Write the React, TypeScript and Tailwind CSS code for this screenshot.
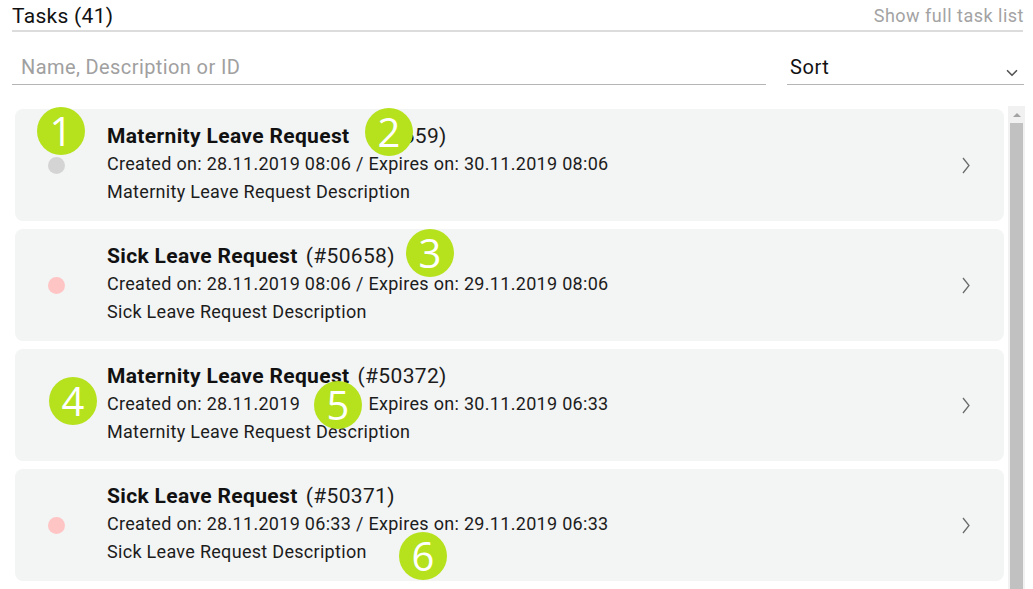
import { ChevronDown } from "lucide-react";

type Task = {
  title: string;
  id: string;
  created: string;
  expires: string;
  description: string;
  dot: string;
};

const tasks: Task[] = [
  {
    title: "Maternity Leave Request",
    id: "(#50659)",
    created: "28.11.2019 08:06",
    expires: "30.11.2019 08:06",
    description: "Maternity Leave Request Description",
    dot: "bg-[#d4d4d4]",
  },
  {
    title: "Sick Leave Request",
    id: "(#50658)",
    created: "28.11.2019 08:06",
    expires: "29.11.2019 08:06",
    description: "Sick Leave Request Description",
    dot: "bg-[#ffc4c4]",
  },
  {
    title: "Maternity Leave Request",
    id: "(#50372)",
    created: "28.11.2019 06:33",
    expires: "30.11.2019 06:33",
    description: "Maternity Leave Request Description",
    dot: "bg-transparent",
  },
  {
    title: "Sick Leave Request",
    id: "(#50371)",
    created: "28.11.2019 06:33",
    expires: "29.11.2019 06:33",
    description: "Sick Leave Request Description",
    dot: "bg-[#ffc4c4]",
  },
];

// numbered markers that sit over the screenshot; some had a patch behind them
const callouts = [
  { n: 1, x: 61, y: 131, cover: null },
  { n: 2, x: 389, y: 132, cover: { l: 36, r: 0, t: 12, b: 16 } },
  { n: 3, x: 430, y: 253, cover: null },
  { n: 4, x: 73, y: 401, cover: null },
  { n: 5, x: 338, y: 405, cover: { l: 36, r: 30, t: 12, b: 12 } },
  { n: 6, x: 423, y: 556, cover: null },
];

const TaskCard = ({ task }: { task: Task }) => (
  <div className="h-[112px] shrink-0 rounded-lg bg-[#f3f4f4] flex items-center">
    <div className="w-[92px] flex justify-center pr-[10px]">
      <div className={`w-[17px] h-[17px] rounded-full ${task.dot}`} />
    </div>
    <div className="flex-1 flex flex-col text-[18px] tracking-[0.3px] leading-[28px] text-[#1c1c1c] pb-[3px]">
      <div className="text-[21px] tracking-[0.35px]">
        <span className="font-bold text-[#111]">{task.title}</span>
        <span className="ml-[8px]">{task.id}</span>
      </div>
      <div>
        Created on: {task.created} / Expires on: {task.expires}
      </div>
      <div>{task.description}</div>
    </div>
    <div className="w-[42px] flex justify-start">
      <svg width="8" height="17" viewBox="0 0 8 17" fill="none">
        <path d="M1 1 L7 8.5 L1 16" stroke="#6b6b6b" strokeWidth="1.3" />
      </svg>
    </div>
  </div>
);

export default function App() {
  return (
    <div className="relative w-[1033px] h-[589px] overflow-hidden bg-white font-['Roboto',sans-serif]">
      {/* Header */}
      <div className="ml-[12px] w-[1011px] h-[32px] border-b-2 border-[#dcdcdc] flex items-start justify-between pt-[3px]">
        <span className="text-[21px] tracking-[0.3px] leading-[26px] text-[#111]">Tasks (41)</span>
        <span className="text-[18px] tracking-[0.5px] leading-[26px] text-[#a3a3a3] mr-[-1px]">Show full task list</span>
      </div>

      {/* Filters */}
      <div className="ml-[12px] mt-[20px] flex gap-[21px]">
        <div className="w-[754px] h-[33px] border-b border-[#b5b5b5] flex items-start pl-[9px]">
          <span className="text-[20px] tracking-[0.4px] leading-[30px] text-[#a0a0a0]">Name, Description or ID</span>
        </div>
        <div className="w-[237px] h-[33px] border-b border-[#b5b5b5] flex items-start justify-between pl-[3px]">
          <span className="text-[20px] tracking-[0.6px] leading-[30px] text-[#111]">Sort</span>
          <ChevronDown size={18} strokeWidth={2.2} className="text-[#555] mt-[12px] mr-[3px]" />
        </div>
      </div>

      {/* List + scrollbar */}
      <div className="mt-[21px] flex">
        <div className="ml-[15px] w-[989px] pt-[3px] flex flex-col gap-[8px]">
          {tasks.map((t, i) => (
            <TaskCard key={i} task={t} />
          ))}
        </div>
        <div className="ml-[4px] w-[17px] h-[500px] bg-[#f1f1f1] flex flex-col items-center">
          <div className="h-[17px] flex items-center justify-center">
            <div className="w-0 h-0 border-l-[4px] border-r-[4px] border-b-[4px] border-l-transparent border-r-transparent border-b-[#a3a3a3]" />
          </div>
          <div className="w-[13px] flex-1 bg-[#c1c1c1]" />
        </div>
      </div>

      {/* Callouts */}
      {callouts.map((c) =>
        c.cover ? (
          <div
            key={`cover-${c.n}`}
            className="absolute bg-[#f3f4f4]"
            style={{
              left: c.x - c.cover.l,
              top: c.y - c.cover.t,
              width: c.cover.l + c.cover.r,
              height: c.cover.t + c.cover.b,
            }}
          />
        ) : null
      )}
      {callouts.map((c) => (
        <div
          key={c.n}
          className="absolute w-[48px] h-[48px] rounded-full bg-[#b5e21c] flex items-center justify-center text-white text-[40px] leading-none font-['Open_Sans',sans-serif]"
          style={{ left: c.x - 24, top: c.y - 24 }}
        >
          {c.n}
        </div>
      ))}
    </div>
  );
}
